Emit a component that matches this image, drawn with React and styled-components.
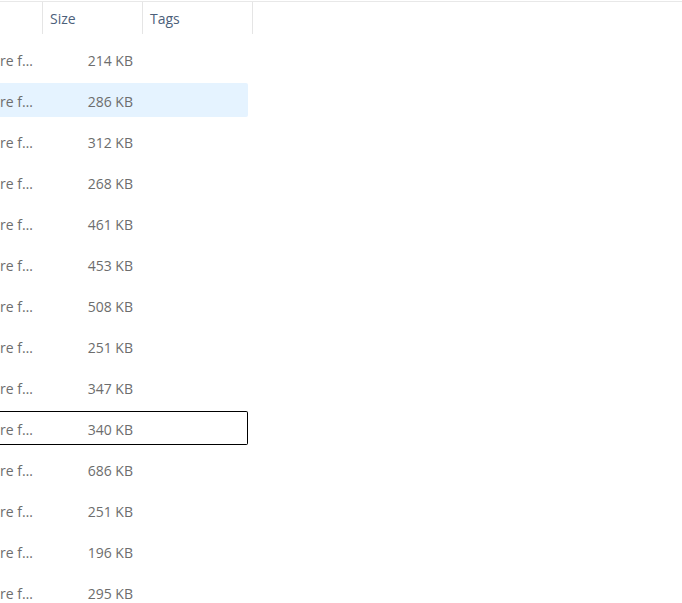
import styled, {createGlobalStyle} from 'styled-components';

const files = [
    {name: 're f…', size: '214 KB'},
    {name: 're f…', size: '286 KB', hover: true},
    {name: 're f…', size: '312 KB'},
    {name: 're f…', size: '268 KB'},
    {name: 're f…', size: '461 KB'},
    {name: 're f…', size: '453 KB'},
    {name: 're f…', size: '508 KB'},
    {name: 're f…', size: '251 KB'},
    {name: 're f…', size: '347 KB'},
    {name: 're f…', size: '340 KB', focus: true},
    {name: 're f…', size: '686 KB'},
    {name: 're f…', size: '251 KB'},
    {name: 're f…', size: '196 KB'},
    {name: 're f…', size: '295 KB'},
];

const GlobalStyle = createGlobalStyle`
    html, body {
        margin: 0;
        background: #ffffff;
        overflow: hidden;
    }
    body {
        font-family: "Open Sans", "Noto Sans", sans-serif;
        font-size: 14px;
    }
`

const Page = styled.div`
    width: 682px;
    height: 603px;
    overflow: hidden;
`

const Header = styled.div`
    display: flex;
    margin-top: 1px;
    height: 32px;
    border-top: 1px solid #e8e8e8;
`

const HeaderCell = styled.div`
    box-sizing: border-box;
    width: ${props => props.$width}px;
    height: 32px;
    padding-left: 7px;
    display: flex;
    align-items: center;
    color: #4c607a;
    border-right: 1px solid #e5e5e5;
`

const List = styled.div`
    display: flex;
    flex-direction: column;
    gap: 7px;
    padding-top: 8px;
`

// name column is scrolled out to the left, so rows have no left edge in view
const Row = styled.div`
    box-sizing: border-box;
    width: 248px;
    height: 34px;
    display: grid;
    grid-template-columns: 42px 100px;
    align-items: center;
    padding-top: 2px;
    border: 1px solid ${props => props.$focus ? '#000000' : 'transparent'};
    border-left: 0;
    border-radius: 0 2px 2px 0;
    background: ${props => props.$hover ? '#e5f3ff' : 'transparent'};
    color: #6d6d6d;
`

const NameCell = styled.div`
    white-space: nowrap;
    overflow: hidden;
`

const SizeCell = styled.div`
    text-align: right;
    padding-right: 9px;
    white-space: nowrap;
`

function App(){
    return(
        <Page>
            <GlobalStyle/>
            <Header>
                <HeaderCell $width={43}></HeaderCell>
                <HeaderCell $width={100}>Size</HeaderCell>
                <HeaderCell $width={110}>Tags</HeaderCell>
            </Header>
            <List>
                {files.map((file, i) => (
                    <Row key={i} $hover={file.hover} $focus={file.focus}>
                        <NameCell>{file.name}</NameCell>
                        <SizeCell>{file.size}</SizeCell>
                    </Row>
                ))}
            </List>
        </Page>
    )
}
export default App
